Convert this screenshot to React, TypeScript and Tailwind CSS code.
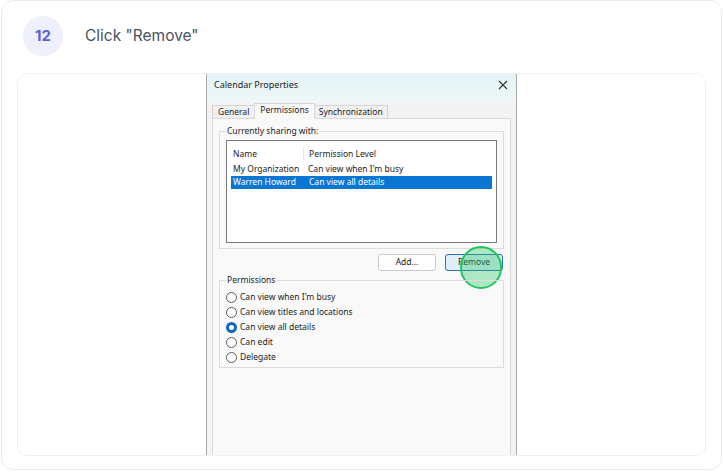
import React from 'react';

const dlgFont = { fontFamily: '"Noto Sans", "Open Sans", sans-serif' };

const Radio: React.FC<{ label: string; checked?: boolean }> = ({ label, checked }) => (
  <div className="flex items-center h-[15px] gap-[3px]">
    {checked ? (
      <span className="w-[11px] h-[11px] rounded-full bg-[#1565c0] flex items-center justify-center">
        <span className="w-[5px] h-[5px] rounded-full bg-white" />
      </span>
    ) : (
      <span className="w-[11px] h-[11px] rounded-full border border-[#5a5a5a] bg-white" />
    )}
    <span>{label}</span>
  </div>
);

const CalendarDialog: React.FC = () => (
  <div
    className="w-[311px] h-[400px] bg-[#f3f3f3] border-x border-[#a9a9a9] text-[8.5px] text-[#1b1b1b] leading-none flex flex-col"
    style={dlgFont}
  >
    {/* title bar */}
    <div className="h-[27px] bg-gradient-to-b from-[#e4f4f7] to-[#eef7f8] flex items-start justify-between pt-[6px] pl-[7px] pr-[7px]">
      <span className="text-[9px] text-[#222]">Calendar Properties</span>
      <svg width="10" height="10" viewBox="0 0 10 10" className="mr-[1px]">
        <path d="M1 1 L9 9 M9 1 L1 9" stroke="#333" strokeWidth="1.1" />
      </svg>
    </div>

    <div className="flex-1 flex flex-col px-[5px] pt-[2px]">
      {/* tabs */}
      <div className="flex items-end h-[15px] relative z-10">
        <div className="h-[13px] px-[5px] flex items-center border-l border-t border-[#d6d6d6] bg-[#f0f0f0]">General</div>
        <div className="h-[16px] px-[5px] flex items-center border-x border-t border-[#d6d6d6] bg-[#f9f9f9] mb-[-1px] pb-[3px]">Permissions</div>
        <div className="h-[13px] px-[4px] flex items-center border-r border-t border-[#d6d6d6] bg-[#f0f0f0]">Synchronization</div>
      </div>

      {/* panel */}
      <div className="flex-1 bg-[#f9f9f9] border border-[#d9d9d9] px-[6px] pt-[12px] flex flex-col">
        {/* group 1 */}
        <div className="relative border border-[#dcdcdc] h-[118px] px-[6px] pt-[8px]">
          <span className="absolute -top-[5px] left-[6px] bg-[#f9f9f9] px-[1px]">Currently sharing with:</span>
          <div className="bg-white border border-[#7a7a7a] h-[103px] px-[4px] pt-[7px]">
            <div className="flex h-[12px] items-center">
              <span className="w-[72px] pl-[2px]">Name</span>
              <span className="border-l border-[#e5e5e5] h-full flex items-center pl-[5px]">Permission Level</span>
            </div>
            <div className="flex h-[13px] items-center mt-[3px]">
              <span className="w-[72px] pl-[2px]">My Organization</span>
              <span className="pl-[5px]">Can view when I&apos;m busy</span>
            </div>
            <div className="flex h-[13px] items-center bg-[#0a76d3] text-white">
              <span className="w-[72px] pl-[2px]">Warren Howard</span>
              <span className="pl-[6px]">Can view all details</span>
            </div>
          </div>
        </div>

        {/* buttons */}
        <div className="flex justify-end gap-[9px] mt-[5px] pr-[1px]">
          <div className="w-[58px] h-[17px] bg-white border border-[#c9c9c9] rounded-[3px] flex items-center justify-center">Add...</div>
          <div className="relative w-[58px] h-[17px] bg-[#dfedf9] border border-[#2b6fb5] rounded-[3px] flex items-center justify-center">
            Remove
            <span className="absolute left-[14px] top-[-9px] w-[42px] h-[43px] rounded-full border-2 border-[#22c55e] bg-[#22c55e]/35" />
          </div>
        </div>

        {/* group 2 */}
        <div className="relative border border-[#dcdcdc] h-[88px] mt-[9px] px-[6px] pt-[9px] flex flex-col">
          <span className="absolute -top-[5px] left-[6px] bg-[#f9f9f9] px-[1px]">Permissions</span>
          <Radio label="Can view when I'm busy" />
          <Radio label="Can view titles and locations" />
          <Radio label="Can view all details" checked />
          <Radio label="Can edit" />
          <Radio label="Delegate" />
        </div>
      </div>
    </div>
  </div>
);

export default function App() {
  return (
    <div className="w-[723px] h-[472px] bg-white" style={{ fontFamily: 'Inter, "Noto Sans", sans-serif' }}>
      <div className="mx-[1px] h-[470px] border border-[#ececef] rounded-[12px] flex flex-col">
        <div className="flex items-center gap-[22px] pl-[21px] pt-[15px]">
          <div className="w-10 h-10 rounded-full bg-[#eef0fd] flex items-center justify-center text-[15px] font-bold text-[#5a5fd8]">
            12
          </div>
          <span className="text-[15.5px] text-[#4b5160]">Click "Remove"</span>
        </div>
        <div className="mx-[15px] mt-[17px] h-[383px] border border-[#f0f0f2] rounded-[10px] bg-white overflow-hidden flex justify-center">
          <CalendarDialog />
        </div>
      </div>
    </div>
  );
}
